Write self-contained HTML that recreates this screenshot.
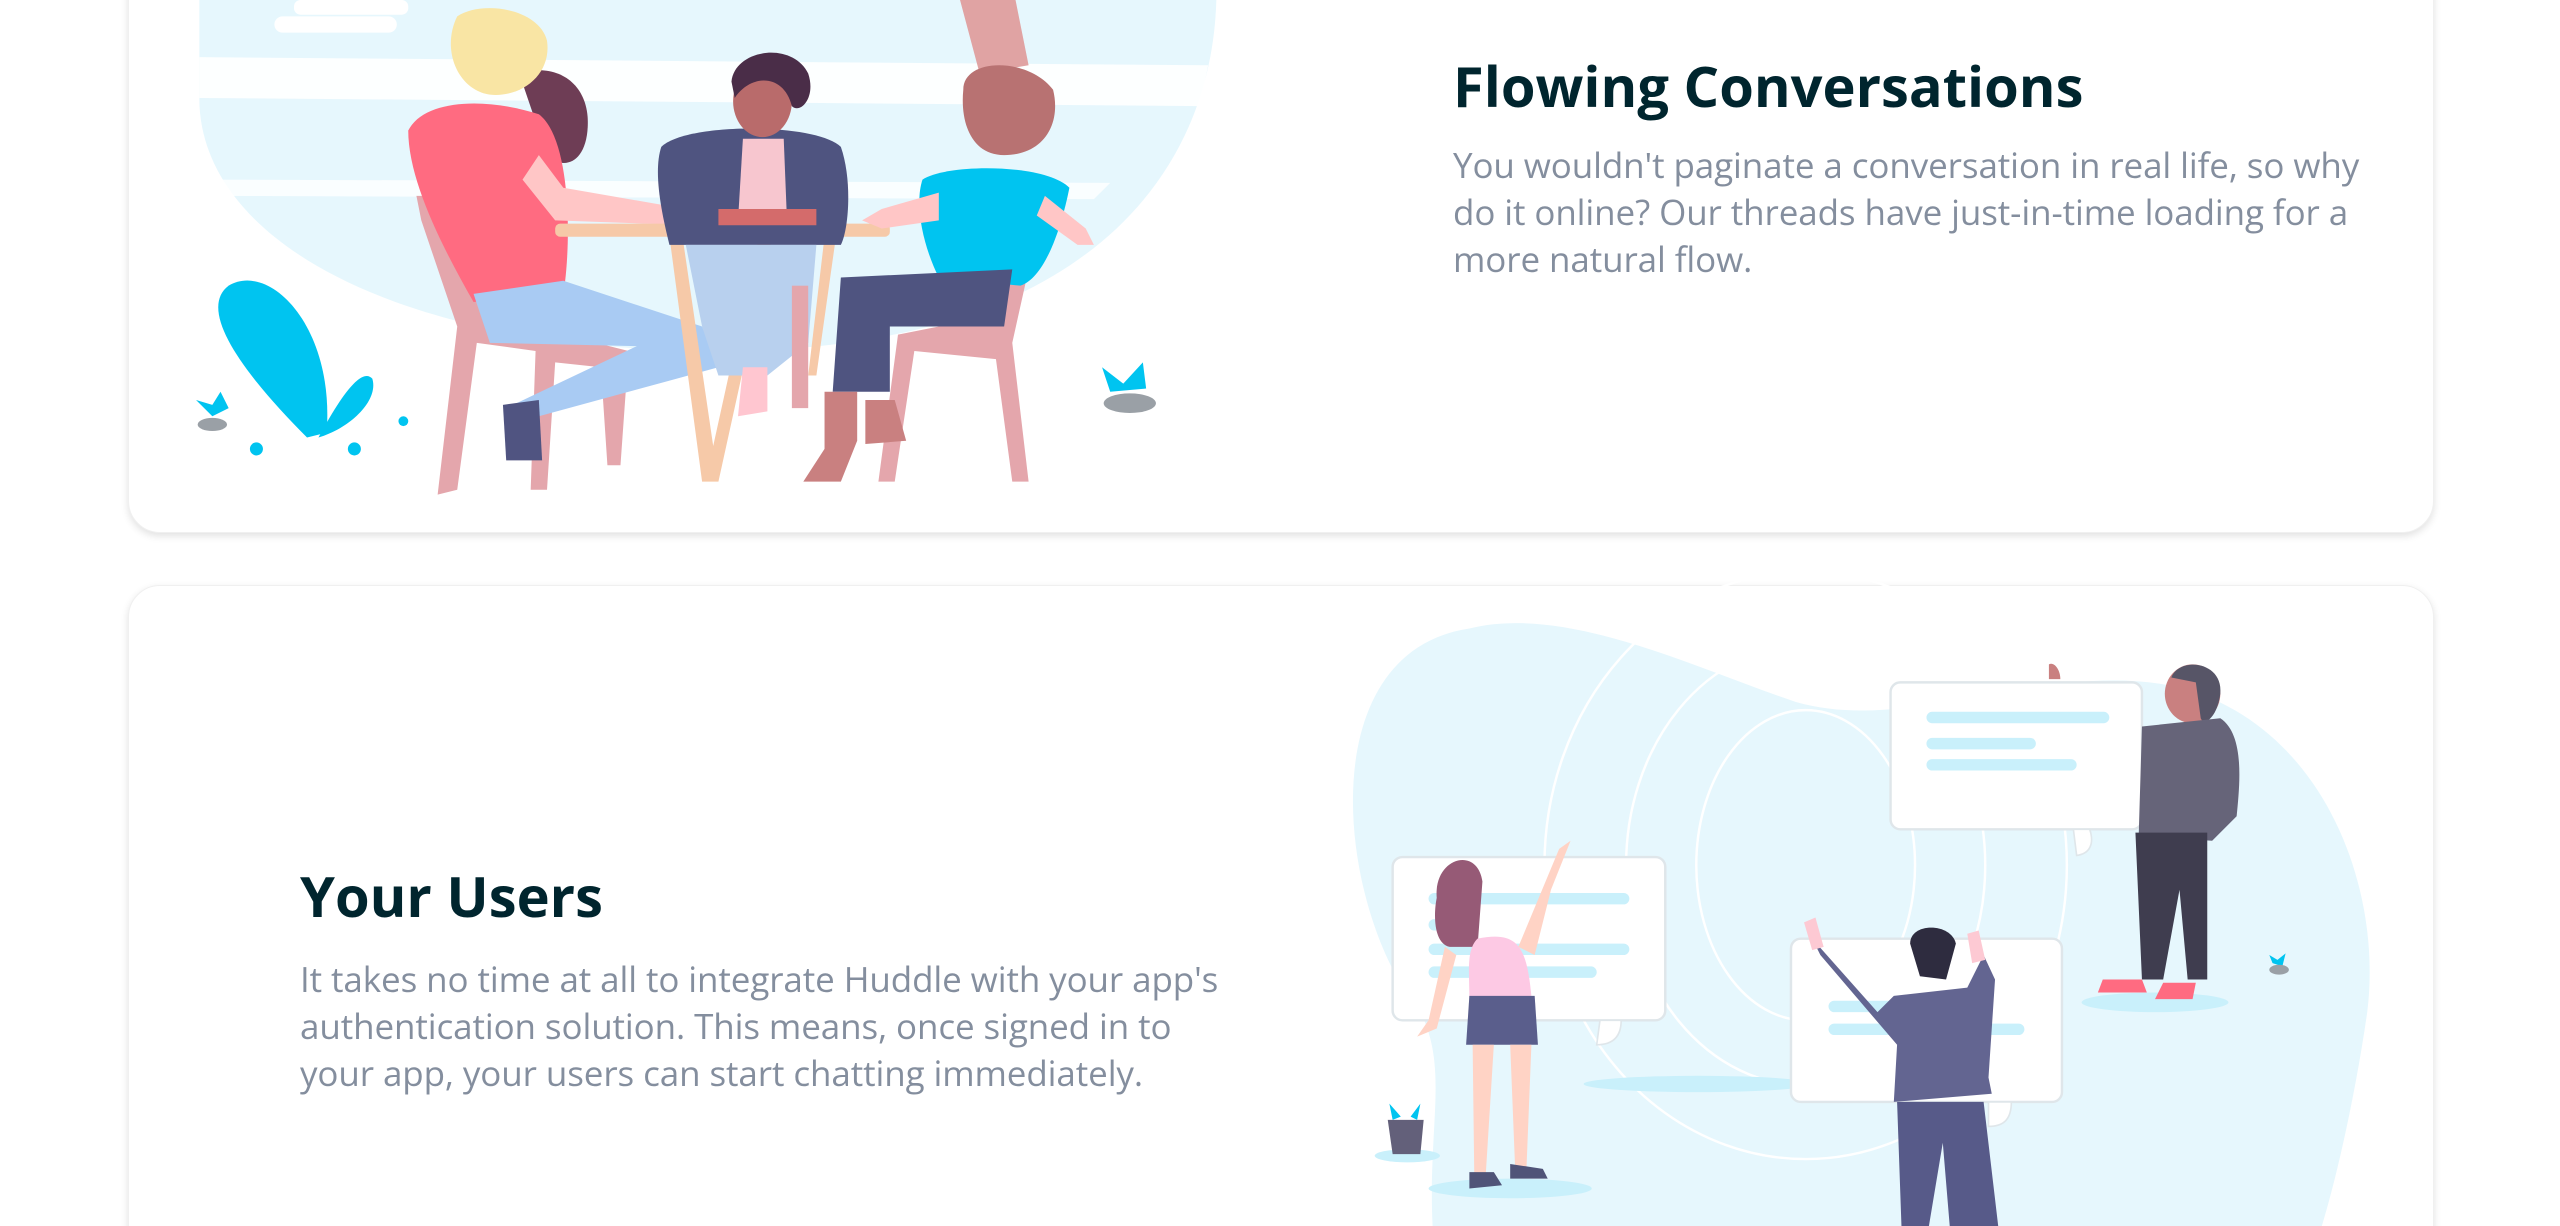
<!DOCTYPE html>
<html><head><meta charset="utf-8"><style>
html,body{margin:0;padding:0;width:2560px;height:1226px;overflow:hidden;background:#fff;font-family:"Open Sans","Liberation Sans",sans-serif}
#wrap{position:relative;width:2560px;height:1226px;overflow:hidden}
.card{position:absolute;left:128px;width:2304px;background:#fff;border-radius:32px;box-shadow:0 3px 8px rgba(0,0,0,0.12);border:1px solid #f0f0f0}
h2{position:absolute;margin:0;font-size:56px;font-weight:700;color:#00252e;white-space:nowrap}
p{position:absolute;margin:0;font-size:35px;line-height:47px;color:#848e9e;letter-spacing:-0.1px}
svg{position:absolute;left:0;top:0}
</style></head><body><div id="wrap">
<div class="card" style="top:-40px;height:571px"></div>
<div class="card" style="top:585px;height:700px"></div>
<svg width="2560" height="1226" viewBox="0 0 1568 751">
<path d="M122,0 L745,0 C742,110 660,215 440,215 C250,215 122,150 122,60 Z" fill="#e6f7fd"/>
<path d="M122,35 L740,40 L735,65 L122,60 Z" fill="#fff" opacity="0.9"/>
<path d="M130,110 L680,112 L670,122 L135,120Z" fill="#fff" opacity="0.8"/>
<rect x="168" y="10" width="75" height="10" rx="5" fill="#fff"/>
<rect x="180" y="0" width="70" height="9" rx="4" fill="#fff"/>
<path d="M588,0 L622,0 L630,40 L600,45 Z" fill="#e0a3a3"/>
<path d="M188,268 C150,230 120,190 140,175 C165,160 205,200 200,265 Z" fill="#00c4f0"/>
<path d="M195,268 C210,240 222,225 228,232 C232,245 215,262 195,268Z" fill="#00c4f0"/>
<path d="M130,255 L120,245 L130,248 L135,240 L140,250 Z" fill="#00c4f0"/>
<ellipse cx="130" cy="260" rx="9" ry="4" fill="#9aa0a6"/>
<path d="M680,240 L675,225 L688,235 L700,222 L702,238 Z" fill="#00c4f0"/>
<ellipse cx="692" cy="247" rx="16" ry="6" fill="#9aa0a6"/>
<circle cx="157" cy="275" r="4" fill="#00c4f0"/><circle cx="217" cy="275" r="4" fill="#00c4f0"/><circle cx="247" cy="258" r="3" fill="#00c4f0"/>
<path d="M255,120 L300,120 L345,205 L385,215 L380,285 L372,285 L368,225 L340,222 L335,300 L325,300 L328,215 L292,210 L280,300 L268,303 L280,200 L258,135 Z" fill="#e4a6ac"/>
<path d="M318,45 C340,38 360,50 360,75 C360,100 345,105 335,95 Z" fill="#6e3d55"/>
<path d="M250,80 C260,60 300,60 330,70 C350,85 350,150 345,180 L290,185 C270,150 250,110 250,80Z" fill="#ff6b81"/>
<path d="M330,95 L345,115 L420,128 L425,138 L340,135 L320,110Z" fill="#ffc6c6"/>
<path d="M280,10 C295,0 330,5 335,25 C338,45 320,60 300,58 C280,55 270,30 280,10Z" fill="#f9e5a4"/>
<path d="M290,180 L345,172 L430,200 L440,225 L330,255 L325,280 L312,280 L310,250 L390,212 L300,210Z" fill="#a9cbf3"/>
<path d="M308,248 L330,245 L332,282 L310,282Z" fill="#505481"/>
<rect x="340" y="137" width="205" height="8" rx="3" fill="#f6c9a8"/>
<path d="M410,145 L418,145 L440,295 L430,295Z M465,145 L473,145 L440,295 L432,295Z M505,145 L512,145 L500,230 L495,230Z" fill="#f6c9a8"/>
<path d="M405,90 C420,75 500,75 515,90 C522,110 520,140 515,150 L410,150 C405,130 400,105 405,90Z" fill="#4f5480"/>
<path d="M455,85 L480,85 L482,135 L452,135Z" fill="#f7c6cf"/>
<ellipse cx="467" cy="62" rx="18" ry="22" fill="#b96b6b"/>
<path d="M448,50 C450,30 485,25 495,45 C500,60 490,70 485,65 C480,45 460,45 450,60Z" fill="#4a2d48"/>
<path d="M440,128 L500,128 L500,138 L440,138Z" fill="#d46b6b"/>
<path d="M420,150 L500,150 L495,210 L470,230 L440,230 L430,200Z" fill="#b8d0ee"/>
<path d="M455,225 L470,225 L470,252 L452,255Z" fill="#ffc6d0"/>
<rect x="485" y="175" width="10" height="75" fill="#e4a6ac"/>
<path d="M640,120 L620,210 L630,295 L620,295 L610,220 L560,215 L548,295 L538,295 L550,205 L600,195 L630,118Z" fill="#e4a6ac"/>
<path d="M590,55 C590,35 630,35 645,55 C650,75 640,95 615,95 C595,95 588,75 590,55Z" fill="#b87272"/>
<path d="M565,110 C580,100 640,100 655,115 C650,140 640,170 625,175 L575,170 C565,150 560,125 565,110Z" fill="#00c4f0"/>
<path d="M575,118 L540,128 L528,135 L540,140 L575,135Z" fill="#ffc6c6"/>
<path d="M640,120 L665,140 L670,150 L660,150 L635,132Z" fill="#ffc6c6"/>
<path d="M515,170 L620,165 L615,200 L545,200 L545,240 L510,240Z" fill="#4f5480"/>
<path d="M505,240 L525,240 L525,270 L515,295 L492,295 L505,275Z" fill="#c98080"/>
<path d="M530,245 L548,245 L555,270 L530,272Z" fill="#c98080"/>
<path d="M900,385 C960,370 1040,410 1100,430 C1170,450 1250,405 1330,420 C1420,440 1460,540 1450,620 C1440,690 1420,770 1410,780 L880,780 C870,700 890,660 870,620 C820,560 800,400 900,385Z" fill="#e6f7fd"/>
<g fill="none" stroke="#fff" stroke-width="1.5">
<ellipse cx="1106" cy="530" rx="67" ry="95"/>
<ellipse cx="1106" cy="530" rx="110" ry="135"/>
<ellipse cx="1106" cy="530" rx="160" ry="180"/>
</g>
<ellipse cx="1040" cy="664" rx="70" ry="5" fill="#c9f0fb"/>
<g stroke="#dfe6ea" stroke-width="1.5" fill="#fff">
<rect x="1158" y="418" width="154" height="90" rx="6"/>
<rect x="853" y="525" width="167" height="100" rx="6"/>
<rect x="1097" y="575" width="166" height="100" rx="6"/>
</g>
<path d="M1270,508 L1280,508 C1283,517 1280,523 1272,524Z M980,625 L993,625 C993,635 988,640 978,640Z M1218,675 L1232,675 C1232,685 1228,690 1218,690Z" fill="#fff" stroke="#dfe6ea"/>
<g fill="#c9f0fb">
<rect x="1180" y="436" width="112" height="7" rx="3.5"/><rect x="1180" y="452" width="67" height="7" rx="3.5"/><rect x="1180" y="465" width="92" height="7" rx="3.5"/>
<rect x="875" y="547" width="123" height="7" rx="3.5"/><rect x="875" y="563" width="30" height="7" rx="3.5"/><rect x="875" y="578" width="123" height="7" rx="3.5"/><rect x="875" y="592" width="103" height="7" rx="3.5"/>
<rect x="1120" y="613" width="40" height="7" rx="3.5"/><rect x="1120" y="627" width="120" height="7" rx="3.5"/>
</g>
<ellipse cx="925" cy="728" rx="50" ry="6" fill="#c9f0fb"/>
<path d="M880,550 C878,525 905,518 908,540 L905,580 L888,580 C878,578 878,560 880,550Z" fill="#965a76"/>
<path d="M905,575 C930,570 935,580 938,610 L900,612 C900,595 898,582 905,575Z" fill="#fdc9e4"/>
<path d="M930,580 L955,520 L962,515 L950,545 L940,585Z" fill="#ffd3c5"/>
<path d="M885,580 L875,625 L868,635 L880,630 L892,585Z" fill="#ffd3c5"/>
<path d="M900,610 L940,610 L942,640 L898,640Z" fill="#5a5e8c"/>
<path d="M902,640 L915,640 L910,720 L903,720Z M925,640 L938,640 L935,715 L928,715Z" fill="#ffd3c5"/>
<path d="M900,718 L915,718 L920,726 L900,728Z M925,713 L945,716 L948,722 L925,722Z" fill="#505478"/>
<ellipse cx="862" cy="708" rx="20" ry="4" fill="#c9f0fb"/>
<path d="M850,686 L872,686 L870,707 L853,707Z" fill="#63607a"/>
<path d="M853,686 L851,676 L858,684 Z M864,684 L870,676 L868,686Z" fill="#00c4f0"/>
<path d="M1110,575 L1150,620 L1160,610 L1205,605 L1215,585 L1222,600 L1218,660 L1220,670 L1160,675 L1162,640 L1115,585Z" fill="#636591"/>
<path d="M1105,565 L1112,562 L1117,580 L1110,582Z M1205,572 L1212,570 L1216,588 L1208,590Z" fill="#fdc9d3"/>
<path d="M1170,578 C1170,565 1195,565 1198,578 L1192,600 L1176,598Z" fill="#2e2c3f"/>
<path d="M1162,675 L1215,675 L1225,760 L1195,760 L1190,700 L1180,760 L1165,760Z" fill="#575a89"/>
<ellipse cx="1320" cy="614" rx="45" ry="6" fill="#c9f0fb"/>
<path d="M1255,407 C1258,405 1262,410 1262,416 L1255,416Z" fill="#c98080"/>
<ellipse cx="1343" cy="425" rx="17" ry="18" fill="#c98080"/>
<path d="M1330,415 C1335,402 1362,405 1360,425 C1358,440 1350,445 1348,440 L1345,418Z" fill="#575567"/>
<path d="M1312,445 L1360,440 C1375,450 1372,480 1370,500 L1355,515 L1310,512Z" fill="#666479"/>
<path d="M1308,510 L1352,510 L1352,600 L1340,600 L1335,545 L1325,600 L1312,600Z" fill="#3f3d4f"/>
<path d="M1288,600 L1312,600 L1315,608 L1285,608Z M1325,602 L1345,602 L1343,612 L1320,612Z" fill="#ff6b81"/>
<path d="M1392,590 L1390,585 L1395,588 L1400,584 L1398,592Z" fill="#00c4f0"/>
<ellipse cx="1396" cy="594" rx="6" ry="3" fill="#9aa0a6"/>
</svg>
<h2 style="left:1453px;top:48px">Flowing Conversations</h2>
<p style="left:1453px;top:142px;width:925px">You wouldn't paginate a conversation in real life, so why do it online? Our threads have just-in-time loading for a more natural flow.</p>
<h2 style="left:300px;top:858px">Your Users</h2>
<p style="left:300px;top:956px;width:925px">It takes no time at all to integrate Huddle with your app's authentication solution. This means, once signed in to your app, your users can start chatting immediately.</p>
</div></body></html>
